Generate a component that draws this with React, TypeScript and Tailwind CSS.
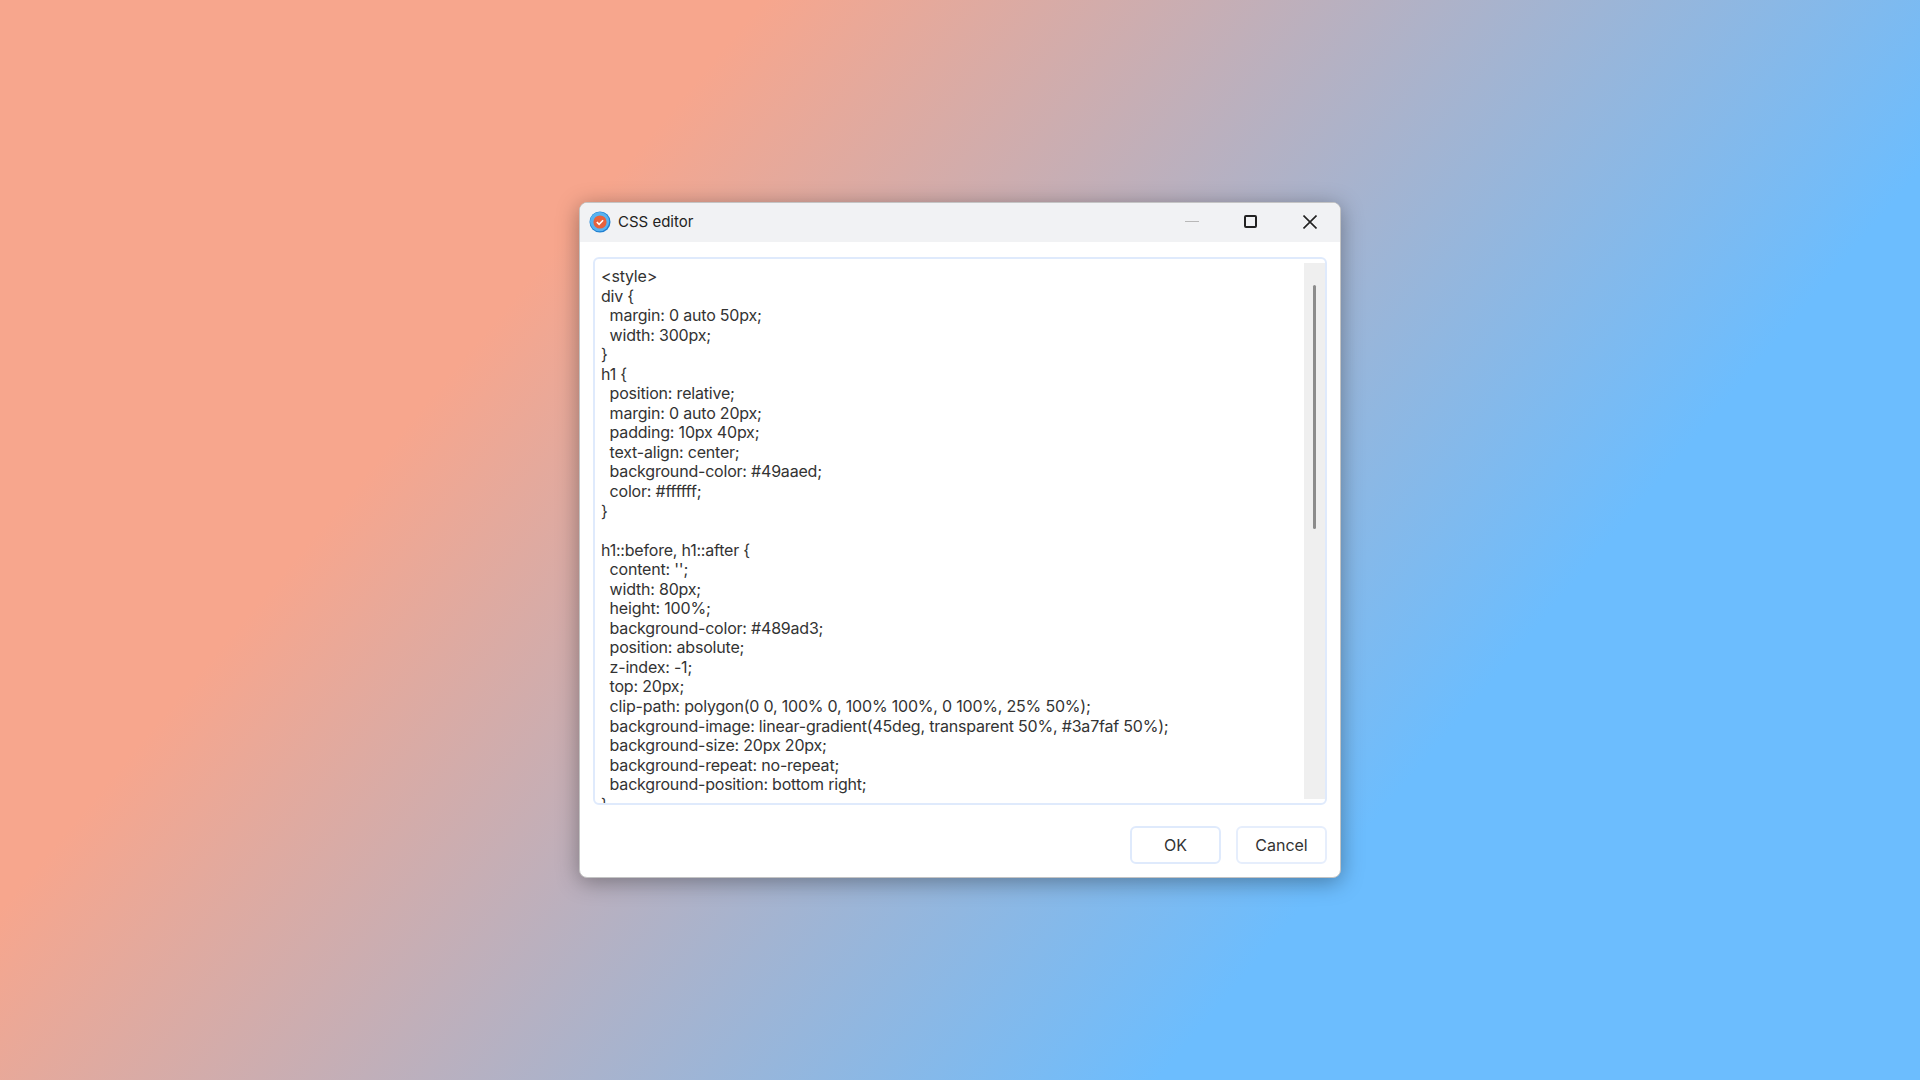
const code = `<style>
div {
  margin: 0 auto 50px;
  width: 300px;
}
h1 {
  position: relative;
  margin: 0 auto 20px;
  padding: 10px 40px;
  text-align: center;
  background-color: #49aaed;
  color: #ffffff;
}

h1::before, h1::after {
  content: '';
  width: 80px;
  height: 100%;
  background-color: #489ad3;
  position: absolute;
  z-index: -1;
  top: 20px;
  clip-path: polygon(0 0, 100% 0, 100% 100%, 0 100%, 25% 50%);
  background-image: linear-gradient(45deg, transparent 50%, #3a7faf 50%);
  background-size: 20px 20px;
  background-repeat: no-repeat;
  background-position: bottom right;
}`;

export default function App() {
  return (
    <div className="w-[1920px] h-[1080px] flex items-center justify-center overflow-hidden bg-[linear-gradient(130deg,#f7a68d_27%,#6cbdfe_73%)] font-['Inter','Liberation_Sans',sans-serif]">
      <div className="w-[762px] h-[676px] flex flex-col bg-white rounded-[8px] overflow-hidden border border-[#c4c4c4] shadow-[0_4px_22px_rgba(0,0,0,0.35)]">
        <div className="h-[39px] shrink-0 bg-[#f1f2f4] flex items-center pl-[9px] pb-[2px] text-[#222]">
          <svg width="22" height="22" viewBox="0 0 22 22">
            <circle cx="11" cy="11" r="10.5" fill="#1f7fd0" />
            <circle cx="10.6" cy="10.6" r="9.6" fill="#58b2f0" />
            <circle cx="11" cy="11" r="6.6" fill="#e8613c" />
            <path d="M7.8 11l2.3 2.3 4-4" fill="none" stroke="#fff" strokeWidth="1.6" />
          </svg>
          <span className="ml-[7px] text-[15px] leading-none">CSS editor</span>
          <div className="ml-auto flex items-center">
            <div className="w-[14px] h-[1px] bg-[#b8b8b8] mr-[45px]" />
            <div className="w-[13px] h-[13px] border-2 border-[#222] rounded-[2px] mr-[46px]" />
            <svg width="14" height="14" viewBox="0 0 14 14" className="mr-[23px]">
              <path d="M0.5 0.5l13 13M13.5 0.5l-13 13" stroke="#222" strokeWidth="1.6" />
            </svg>
          </div>
        </div>
        <div className="flex-1 flex flex-col px-[13px] pt-[15px] pb-[12px]">
          <div className="h-[548px] border-2 border-[#dfeafc] rounded-[6px] flex overflow-hidden">
            <pre className="flex-1 overflow-hidden pl-[6px] pt-[8px] text-[16px] leading-[19.55px] text-[#333] tracking-[-0.2px] font-['Inter','Liberation_Sans',sans-serif]">
              {code}
            </pre>
            <div className="w-[21px] shrink-0 my-[4px] bg-[#efefef] pt-[22px] flex justify-center">
              <div className="w-[3px] h-[244px] bg-[#8c8c8c] rounded-full" />
            </div>
          </div>
          <div className="mt-[21px] flex justify-end gap-[15px]">
            <button className="w-[91px] h-[38px] bg-white border-2 border-[#dfeafc] rounded-[6px] text-[16px] text-[#333]">OK</button>
            <button className="w-[91px] h-[38px] bg-white border-2 border-[#e6eefc] rounded-[6px] text-[16px] text-[#333]">Cancel</button>
          </div>
        </div>
      </div>
    </div>
  );
}
